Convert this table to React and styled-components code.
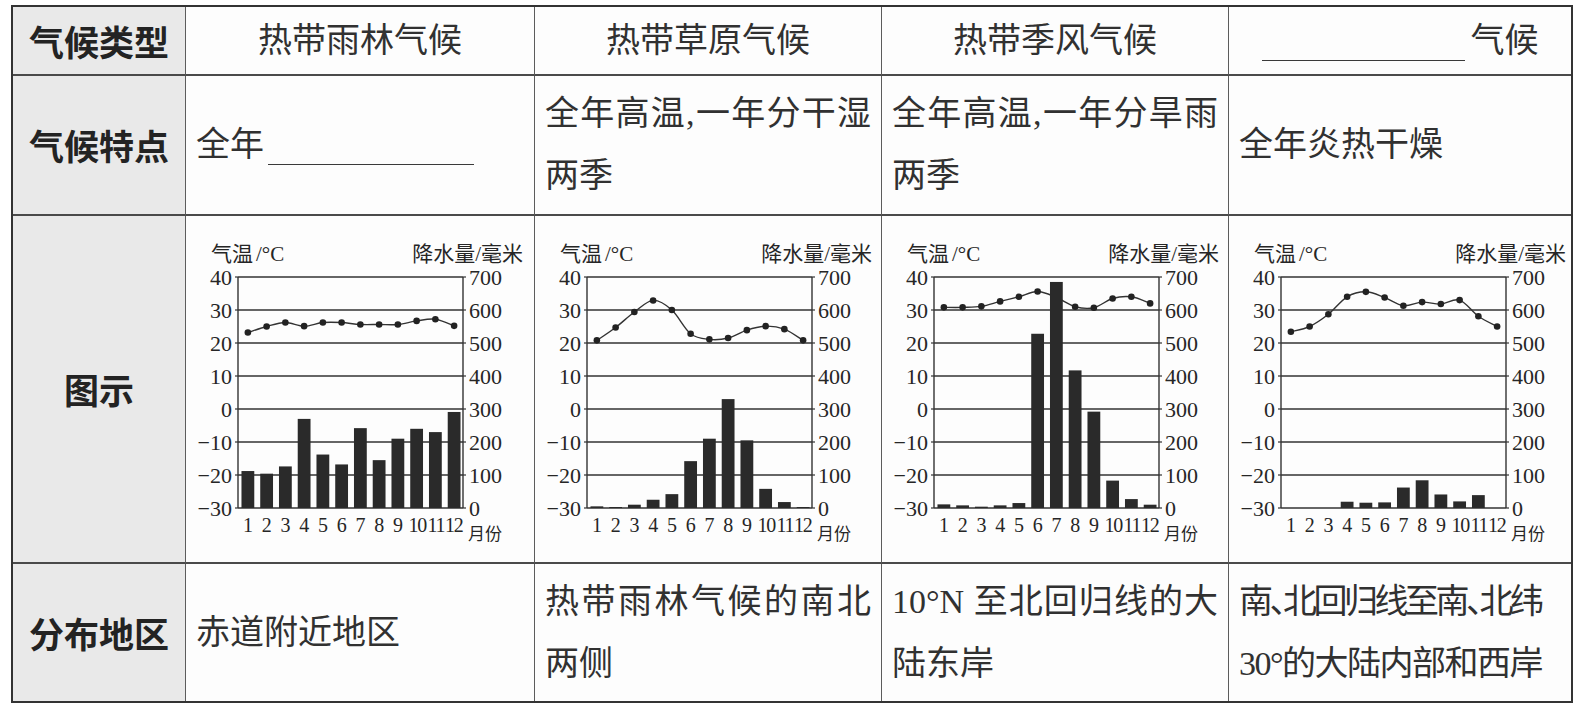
import React from 'react';
import styled, { createGlobalStyle } from 'styled-components';

const Global = createGlobalStyle`
  html, body { margin: 0; padding: 0; background: #ffffff; }
  body {
    font-family: "Liberation Serif", "Noto Sans CJK SC", serif;
    color: #313131;
  }
`;

const Table = styled.div`
  display: grid;
  grid-template-columns: 173px 349px 347px 347px 342px;
  grid-template-rows: 69px 140px 348px 137px;
  width: max-content;
  margin: 5px 0 0 11px;
  border: 2px solid #333;
`;

const Cell = styled.div`
  box-sizing: border-box;
  min-width: 0;
  border-right: ${(p) => (p.$lastCol ? 'none' : '1px solid #5c5c5c')};
  border-bottom: ${(p) => (p.$lastRow ? 'none' : '2px solid #4a4a4a')};
  background: #fdfdfd;
  display: flex;
  align-items: ${(p) => (p.$top ? 'flex-start' : 'center')};
  justify-content: ${(p) => (p.$center ? 'center' : 'flex-start')};
  padding: ${(p) => (p.$flush ? '0' : '0 10px')};
  font-size: 34px;
  line-height: 62px;
`;

const HeadCell = styled(Cell)`
  background: #e9e9e9;
  justify-content: center;
  font-family: "Noto Sans CJK SC", sans-serif;
  font-weight: 700;
  font-size: 35px;
  color: #232323;
  padding: 0;
`;

const Para = styled.div`
  width: 100%;
  text-align: justify;
`;

const Line = styled.span`
  display: block;
  white-space: nowrap;
  letter-spacing: ${(p) => p.$tracking || 0}px;
  font-feature-settings: "halt";
`;

const Blank = styled.span`
  display: inline-block;
  width: ${(p) => p.$w}px;
  height: 0;
  border-bottom: 1.5px solid #3a3a3a;
  vertical-align: ${(p) => -p.$drop}px;
  margin-left: ${(p) => p.$ml || 0}px;
  margin-right: ${(p) => p.$mr || 0}px;
`;

const ChartSvg = styled.svg`
  display: block;
  overflow: visible;
  text {
    font-family: "Liberation Serif", "Noto Sans CJK SC", serif;
    fill: #262626;
  }
  .title { font-size: 21px; }
  .axis { font-size: 22px; }
  .month { font-size: 20px; }
  .unit { font-size: 17px; font-family: "Noto Sans CJK SC", sans-serif; }
`;

const PL = 52;
const PR = 277;
const PT = 61;
const PB = 292;
const STEP = (PB - PT) / 7;

const tempY = (t) => PB - ((t + 30) / 10) * STEP;
const rainY = (r) => PB - (r / 100) * STEP;
const slot = (PR - PL) / 12;
const cx = (i) => PL + (i + 0.5) * slot + 0.5;

function smooth(pts) {
  let d = `M${pts[0][0].toFixed(1)},${pts[0][1].toFixed(1)}`;
  for (let i = 0; i < pts.length - 1; i++) {
    const p0 = pts[i - 1] || pts[i];
    const p1 = pts[i];
    const p2 = pts[i + 1];
    const p3 = pts[i + 2] || p2;
    const t = 6;
    const c1x = p1[0] + (p2[0] - p0[0]) / t;
    const c1y = p1[1] + (p2[1] - p0[1]) / t;
    const c2x = p2[0] - (p3[0] - p1[0]) / t;
    const c2y = p2[1] - (p3[1] - p1[1]) / t;
    d += ` C${c1x.toFixed(1)},${c1y.toFixed(1)} ${c2x.toFixed(1)},${c2y.toFixed(1)} ${p2[0].toFixed(1)},${p2[1].toFixed(1)}`;
  }
  return d;
}

const leftLabels = ['40', '30', '20', '10', '0', '-10', '-20', '-30'];
const rightLabels = ['700', '600', '500', '400', '300', '200', '100', '0'];

function Chart({ temps, rain }) {
  const pts = temps.map((t, i) => [cx(i), tempY(t)]);
  return (
    <ChartSvg width="345" height="346" viewBox="0 0 345 346">
      <text className="title" x="25" y="45">
        气温<tspan dx="3">/°C</tspan>
      </text>
      <text className="title" x="337" y="45" textAnchor="end">
        降水量/毫米
      </text>
      {leftLabels.map((l, i) => {
        const y = PT + i * STEP;
        return (
          <g key={l}>
            <line x1={PL} x2={PR} y1={y} y2={y} stroke="#333" strokeWidth="1.4" />
            <line x1={PL - 3} x2={PL} y1={y} y2={y} stroke="#333" strokeWidth="1.2" />
            <line x1={PR} x2={PR + 3} y1={y} y2={y} stroke="#333" strokeWidth="1.2" />
            <text className="axis" x={PL - 6} y={y + 7.5} textAnchor="end">
              {l.startsWith('-') ? '\u2212' + l.slice(1) : l}
            </text>
            <text className="axis" x={PR + 6} y={y + 7.5}>
              {rightLabels[i]}
            </text>
          </g>
        );
      })}
      <line x1={PL} x2={PL} y1={PT} y2={PB} stroke="#333" strokeWidth="1.4" />
      <line x1={PR} x2={PR} y1={PT} y2={PB} stroke="#333" strokeWidth="1.4" />
      <path d={smooth(pts)} fill="none" stroke="#333" strokeWidth="1.4" />
      {pts.map((p, i) => (
        <circle key={i} cx={p[0]} cy={p[1]} r="3.3" fill="#222" />
      ))}
      {rain.map((r, i) =>
        r > 0 ? (
          <rect key={i} x={cx(i) - 6.4} y={rainY(r)} width="12.8" height={PB - rainY(r)} fill="#2a2a2a" />
        ) : null
      )}
      {temps.map((_, i) => (
        <text
          key={i}
          className="month"
          x={cx(i) + (i >= 9 ? 0.6 : 0) - (i === 11 ? 1 : 0)}
          y={PB + 24}
          textAnchor="middle"
          letterSpacing={i >= 9 ? -1.2 : 0}
        >
          {i + 1}
        </text>
      ))}
      <text className="unit" x={PR + 5} y={PB + 32}>
        月份
      </text>
    </ChartSvg>
  );
}

const charts = [
  {
    temps: [23.2, 25, 26.2, 25.1, 26.2, 26.2, 25.6, 25.6, 25.6, 26.7, 27.2, 25.2],
    rain: [112, 104, 126, 270, 162, 132, 242, 145, 210, 240, 230, 291],
  },
  {
    temps: [20.8, 24.7, 29.4, 32.9, 30, 22.8, 21.1, 21.5, 23.9, 25.1, 24.2, 20.8],
    rain: [5, 3, 10, 25, 42, 142, 210, 330, 205, 58, 18, 3],
  },
  {
    temps: [30.8, 30.8, 31.1, 32.6, 34, 35.6, 33.8, 31, 30.7, 33.5, 34, 32],
    rain: [11, 8, 4, 8, 15, 528, 685, 417, 292, 83, 27, 10],
  },
  {
    temps: [23.4, 25, 28.7, 34, 35.5, 33.8, 31.3, 32.4, 31.8, 33, 28.1, 25],
    rain: [0, 0, 0, 19, 16, 17, 62, 84, 41, 20, 39, 0],
  },
];

export default function App() {
  return (
    <>
      <Global />
      <Table>
        <HeadCell>气候类型</HeadCell>
        <Cell $center>热带雨林气候</Cell>
        <Cell $center>热带草原气候</Cell>
        <Cell $center>热带季风气候</Cell>
        <Cell $center $lastCol>
          <span>
            <Blank $w={203} $drop={9} $mr={6} />
            气候
          </span>
        </Cell>

        <HeadCell>气候特点</HeadCell>
        <Cell>
          <span>
            全年
            <Blank $w={206} $drop={9} $ml={4} />
          </span>
        </Cell>
        <Cell>
          <Para>全年高温,一年分干湿两季</Para>
        </Cell>
        <Cell>
          <Para>全年高温,一年分旱雨两季</Para>
        </Cell>
        <Cell $lastCol>
          <Para>全年炎热干燥</Para>
        </Cell>

        <HeadCell>图示</HeadCell>
        {charts.map((c, i) => (
          <Cell key={i} $top $flush $lastCol={i === 3}>
            <Chart temps={c.temps} rain={c.rain} />
          </Cell>
        ))}

        <HeadCell $lastRow>分布地区</HeadCell>
        <Cell $lastRow>
          <Para>赤道附近地区</Para>
        </Cell>
        <Cell $lastRow>
          <Para>热带雨林气候的南北两侧</Para>
        </Cell>
        <Cell $lastRow>
          <Para>10°N 至北回归线的大陆东岸</Para>
        </Cell>
        <Cell $lastRow $lastCol>
          <Para>
            <Line $tracking={-3.5}>南、北回归线至南、北纬</Line>
            <Line $tracking={-1.5}>30°的大陆内部和西岸</Line>
          </Para>
        </Cell>
      </Table>
    </>
  );
}
